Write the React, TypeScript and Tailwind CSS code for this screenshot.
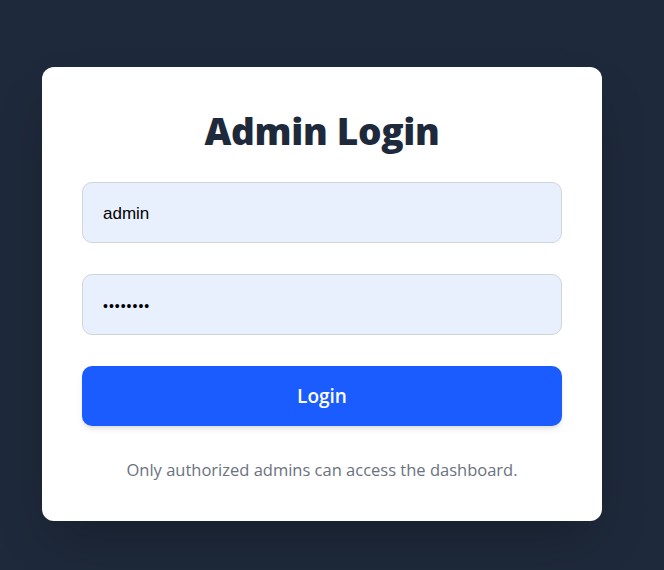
import React from "react";

export default function App() {
  return (
    <div
      className="min-h-screen w-full bg-[#1e293b] pt-[67px] pl-[42px]"
      style={{ fontFamily: '"Open Sans", "Noto Sans", sans-serif' }}
    >
      <div className="w-[560px] h-[454px] rounded-xl bg-white px-10 pt-[44px] shadow-2xl">
        <h1 className="text-center text-[37px] leading-[40px] font-extrabold text-[#1e293b] tracking-[-0.3px]">
          Admin Login
        </h1>
        <div className="mt-[31px] flex flex-col">
          <div className="flex h-[61px] items-center rounded-[10px] border border-[#d1d5db] bg-[#e8f0fe] px-5 pt-[3px] text-[17px] text-black"
            style={{ fontFamily: '"Liberation Sans", Arial, sans-serif' }}>
            admin
          </div>
          <div className="mt-[31px] flex h-[61px] items-center rounded-[10px] border border-[#d1d5db] bg-[#e8f0fe] px-5 pt-[4px] text-[17px] text-black"
            style={{ fontFamily: '"Liberation Sans", Arial, sans-serif' }}>
            <span className="text-[14px] tracking-[1px]">••••••••</span>
          </div>
          <button className="mt-[31px] flex h-[60px] items-center justify-center rounded-[10px] bg-[#1a5cff] text-[19px] font-semibold text-white shadow-md">
            Login
          </button>
          <p className="mt-[32px] text-center text-[16.5px] text-[#6b7280]">
            Only authorized admins can access the dashboard.
          </p>
        </div>
      </div>
    </div>
  );
}
